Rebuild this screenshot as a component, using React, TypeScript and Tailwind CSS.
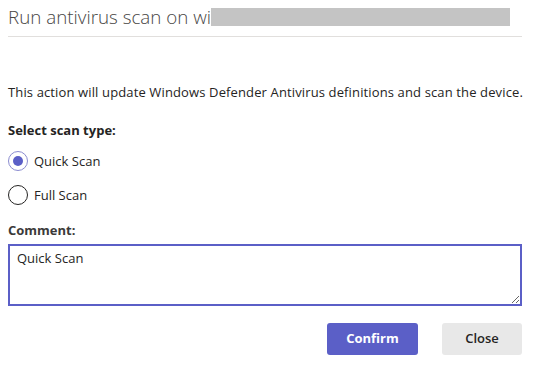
import React, { useState } from 'react';

const SCAN_TYPES = [
  { value: 'quick', label: 'Quick Scan' },
  { value: 'full', label: 'Full Scan' },
];

export default function App() {
  const [scanType, setScanType] = useState('quick');
  const [comment, setComment] = useState('Quick Scan');

  return (
    <div className="w-[548px] h-[372px] bg-white px-2 text-[#252423]" style={{ fontFamily: '"Open Sans", "Noto Sans", sans-serif' }}>
      {/* Header */}
      <div className="flex items-start pt-[5px] h-[37px] border-b border-[#e1dfdd] w-[514px]">
        <h2 className="text-[18.8px] font-light text-[#484644] leading-6 whitespace-nowrap">Run antivirus scan on wi</h2>
        <div className="mt-[3px] h-[18px] w-[299px] bg-[#c4c4c4]" />
      </div>

      <p className="mt-[45px] text-[13px] leading-5 tracking-[0.13px]">
        This action will update Windows Defender Antivirus definitions and scan the device.
      </p>

      {/* Scan type */}
      <div className="mt-[18px]">
        <label className="block text-[13px] font-bold leading-5">Select scan type:</label>
        <div className="mt-[11px] flex flex-col gap-[14px]">
          {SCAN_TYPES.map((t) => (
            <button
              key={t.value}
              onClick={() => setScanType(t.value)}
              className="flex items-center gap-[6px] h-[20px] text-left"
            >
              <span
                className={`flex items-center justify-center w-[20px] h-[20px] rounded-full border ${
                  scanType === t.value ? 'border-[#8b8cd0]' : 'border-[#252423]'
                }`}
              >
                {scanType === t.value && <span className="w-[10px] h-[10px] rounded-full bg-[#5b5fc7]" />}
              </span>
              <span className="text-[13px] leading-5">{t.label}</span>
            </button>
          ))}
        </div>
      </div>

      {/* Comment */}
      <div className="mt-[15px]">
        <label className="block text-[13px] font-bold leading-5 text-[#3b3a39]">Comment:</label>
        <textarea
          value={comment}
          onChange={(e) => setComment(e.target.value)}
          className="mt-[4px] block w-[514px] h-[62px] border-2 border-[#5b5fc7] px-[7px] py-[2px] text-[13px] leading-5 outline-none resize-y"
        />
      </div>

      {/* Actions */}
      <div className="mt-[17px] flex justify-end gap-[24px] w-[514px]">
        <button className="w-[91px] h-[32px] rounded-[3px] bg-[#5b5fc7] text-white text-[13px] font-bold">Confirm</button>
        <button className="w-[80px] h-[32px] rounded-[3px] bg-[#e8e8e8] text-[#252423] text-[13px] font-semibold">Close</button>
      </div>
    </div>
  );
}
